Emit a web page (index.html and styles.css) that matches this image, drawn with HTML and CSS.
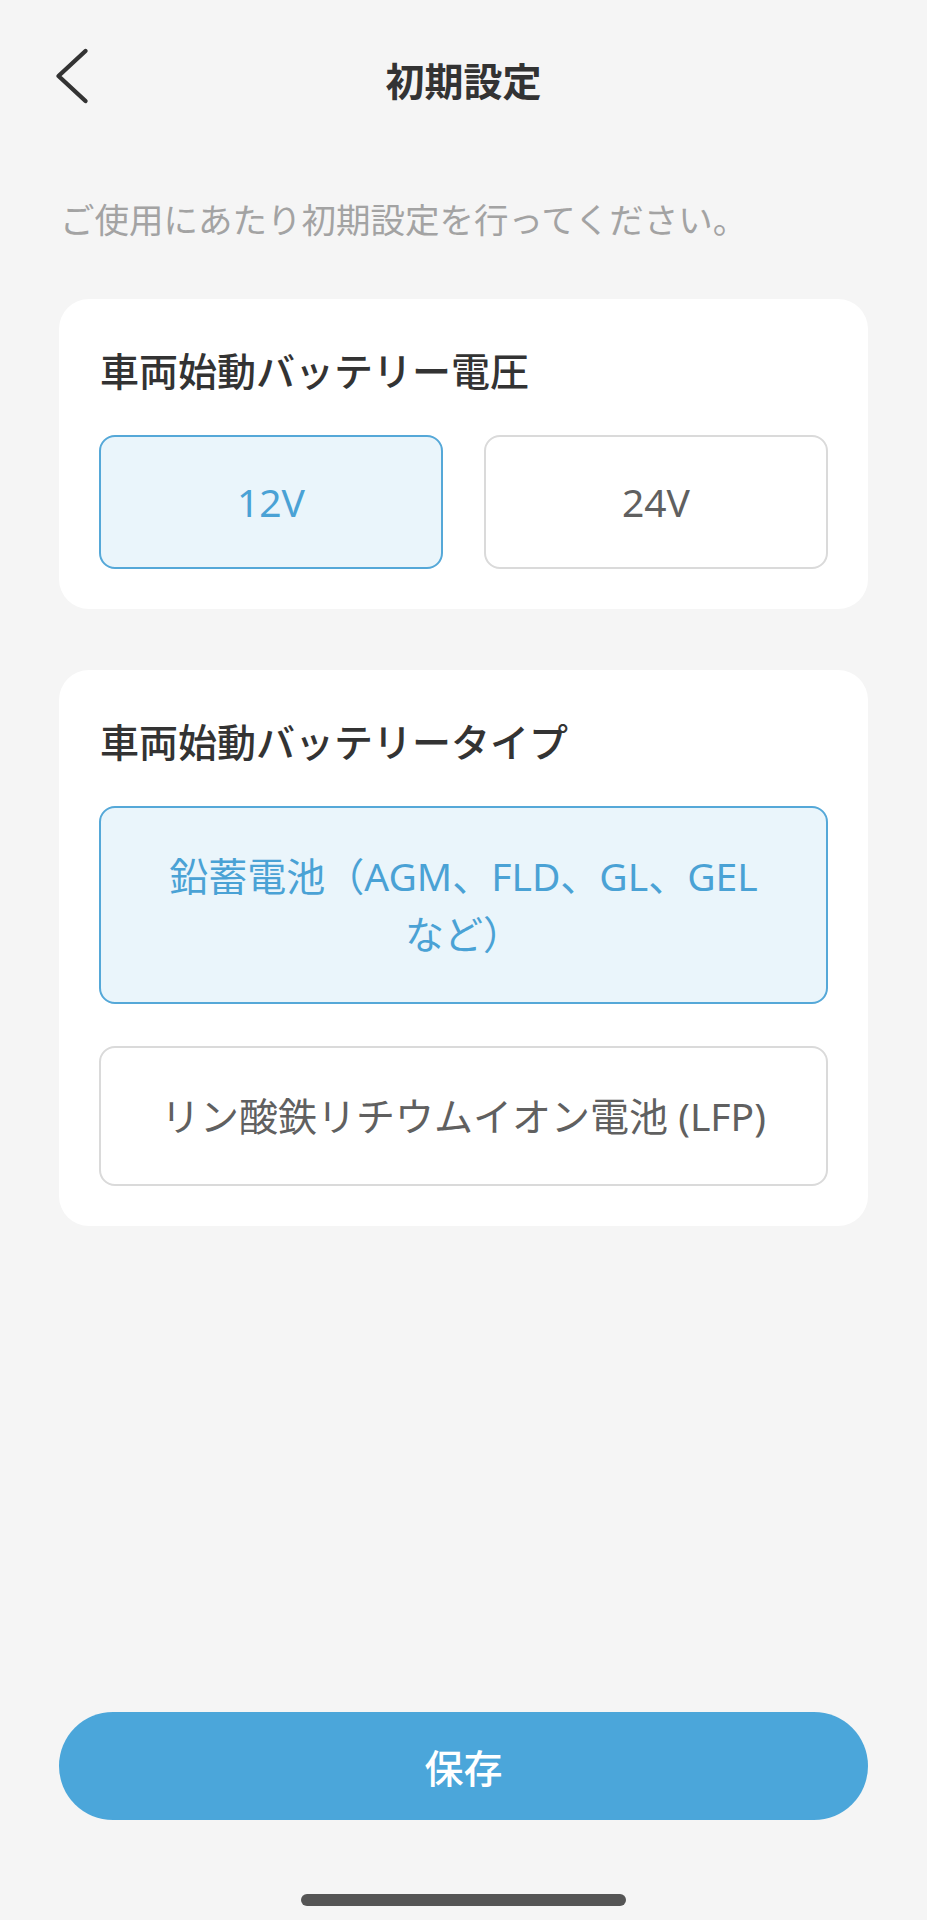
FILE: index.html
```html
<!DOCTYPE html>
<html lang="ja">
<head>
<meta charset="utf-8">
<title>初期設定</title>
<link rel="stylesheet" href="styles.css">
</head>
<body>
<div class="screen">
  <header class="topbar">
    <svg class="back" width="36" height="64" viewBox="0 0 36 64" aria-hidden="true">
      <polyline points="30.5,4 3.5,29 30.5,54" fill="none" stroke="#333" stroke-width="4.4" stroke-linecap="round" stroke-linejoin="round"/>
    </svg>
    <h1 class="title">初期設定</h1>
    <span class="spacer-col"></span>
  </header>

  <p class="lead">ご使用にあたり初期設定を行ってください。</p>

  <section class="card">
    <h2 class="card-title">車両始動バッテリー電圧</h2>
    <div class="grid-two">
      <div class="opt opt-short is-selected">12V</div>
      <div class="opt opt-short">24V</div>
    </div>
  </section>

  <section class="card card-gap">
    <h2 class="card-title">車両始動バッテリータイプ</h2>
    <div class="stack">
      <div class="opt opt-tall is-selected">鉛蓄電池（AGM、FLD、GL、GEL<br>など）</div>
      <div class="opt opt-tall">リン酸鉄リチウムイオン電池 (LFP)</div>
    </div>
  </section>

  <div class="fill"></div>

  <button class="save" type="button">保存</button>

  <div class="home-area"><div class="home-bar"></div></div>
</div>
</body>
</html>
```

FILE: styles.css
```css
* { box-sizing: border-box; }

html, body {
  margin: 0;
  padding: 0;
  background: #f5f5f5;
}

body {
  font-family: "Noto Sans", "Noto Sans CJK JP", sans-serif;
  color: #333;
}

.screen {
  width: 927px;
  height: 1920px;
  padding: 0 59px;
  display: flex;
  flex-direction: column;
}

.topbar {
  height: 158px;
  display: grid;
  grid-template-columns: 1fr auto 1fr;
  align-items: center;
}

.back {
  display: block;
  margin-left: -4px;
}

.title {
  margin: 0;
  font-size: 39px;
  line-height: 60px;
  font-weight: 700;
  color: #333;
  font-family: "Noto Sans CJK JP", sans-serif;
}

.lead {
  margin: 36px 0 0;
  font-size: 34.5px;
  line-height: 48px;
  color: #a3a3a3;
  font-family: "Noto Sans CJK JP", sans-serif;
  padding-left: 1px;
}

.card {
  margin-top: 57px;
  background: #ffffff;
  border-radius: 30px;
  padding: 40px;
}

.card-gap {
  margin-top: 61px;
}

.card-title {
  margin: 0 0 36px;
  padding-left: 1px;
  font-size: 39px;
  line-height: 60px;
  font-weight: 500;
  color: #333;
  font-family: "Noto Sans CJK JP", sans-serif;
}

.grid-two {
  display: grid;
  grid-template-columns: 1fr 1fr;
  gap: 41px;
}

.stack {
  display: flex;
  flex-direction: column;
  gap: 42px;
}

.opt {
  border: 2px solid #dadada;
  border-radius: 16px;
  background: #ffffff;
  color: #606060;
  font-size: 39px;
  line-height: 58px;
  text-align: center;
  font-family: "Noto Sans", "Noto Sans CJK JP", sans-serif;
}

.opt-short {
  padding: 36px 10px;
}

.opt-tall {
  padding: 39px 10px;
}

.opt.is-selected {
  border-color: #55a8d8;
  background: #eaf5fb;
  color: #4aa2d5;
}

.fill {
  flex: 1;
}

.save {
  display: block;
  width: 100%;
  height: 108px;
  border: none;
  border-radius: 54px;
  background: #4ba6da;
  color: #ffffff;
  font-size: 39px;
  font-weight: 500;
  font-family: "Noto Sans CJK JP", sans-serif;
  padding: 0;
}

.home-area {
  padding: 74px 0 14px;
  display: flex;
  justify-content: center;
}

.home-bar {
  width: 325px;
  height: 12px;
  border-radius: 6px;
  background: #555555;
}
```
